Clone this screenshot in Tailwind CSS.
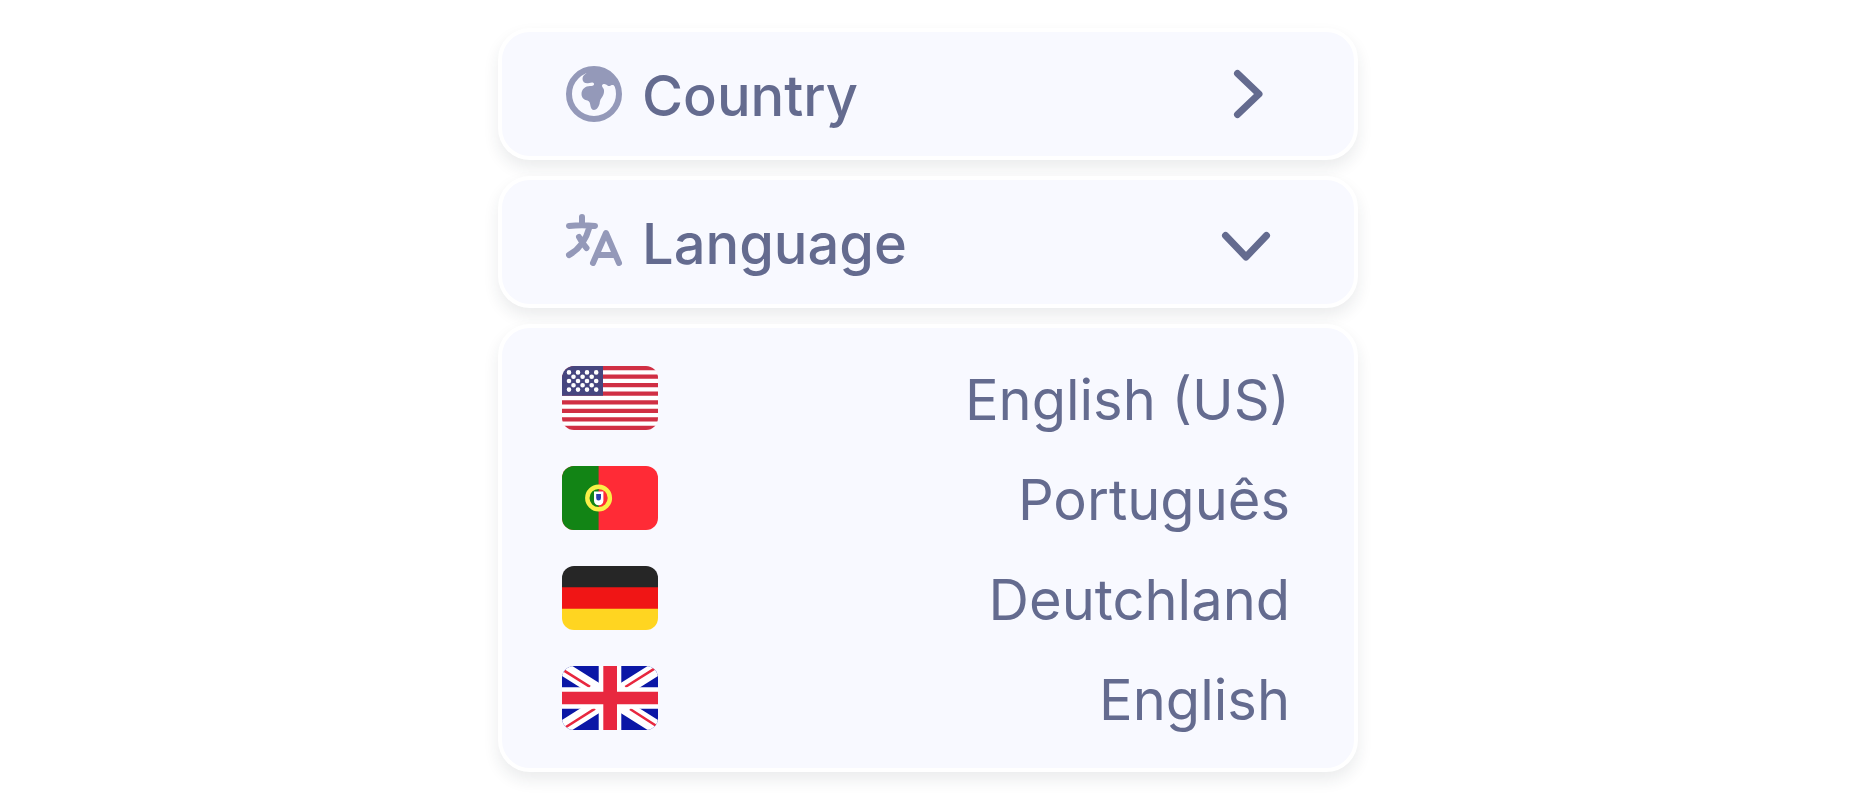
<!DOCTYPE html>
<html lang="en">

<head>
    <meta charset="UTF-8">
    <meta name="viewport" content="width=device-width, initial-scale=1.0">
    <script src="https://cdn.jsdelivr.net/npm/@tailwindcss/browser@4"></script>
    <title>Country and language</title>
</head>

<body class="bg-white font-['Inter',sans-serif] text-[56px] leading-[60px] text-[#646b8f]">
    <main class="mx-auto flex max-w-[860px] flex-col gap-4 py-7">
        <button type="button" aria-expanded="false"
            class="flex items-center gap-4 rounded-[32px] border-4 border-white bg-[#f8f9ff] py-[30px] pr-19 pl-15 text-left font-medium shadow-[0_8px_16px_rgba(30,40,60,0.09)]">
            <svg class="size-16 shrink-0 text-[#9499b9]" viewBox="0 0 64 64" fill="none" aria-hidden="true">
                <circle cx="32" cy="32" r="25" stroke="currentColor" stroke-width="6" />
                <path fill="currentColor"
                    d="M24 11.500C21.500 13 20.500 15 20.500 17C20.500 20 23 21.500 26 21.200L30 20.500C31.500 20.300 32.300 21.500 32 22.500C31.700 24 30 24 28 24C23.500 24 19.500 27 19.500 32C19.500 36.500 23 38 25.500 38.500C27.500 39 28 41 28.300 43C28.700 46 30 48 32 48C34.500 48 36.500 45 37.500 42C38 39 38 38 39.500 36C41.500 33.500 42.300 30.500 42 28C41.700 26 40 25.500 40 23.800C40 22 42.500 21.500 44 22.500C45.500 23.500 46 24.300 47.500 24C49.500 23.500 50 22.500 52 23.500L55 27C54 15 44 7 32 7C29 7 26.500 8 24 11.500Z" />
            </svg>
            <span class="grow pt-1">Country</span>
            <svg class="size-16 shrink-0" viewBox="0 0 64 64" fill="none" stroke="currentColor" stroke-width="7"
                stroke-linecap="round" stroke-linejoin="round" aria-hidden="true">
                <path d="M23.500 11.500L45 32L23.500 52.500" />
            </svg>
        </button>

        <button type="button" aria-expanded="true" aria-controls="languages"
            class="flex items-center gap-4 rounded-[32px] border-4 border-white bg-[#f8f9ff] py-[30px] pr-19 pl-15 text-left font-medium shadow-[0_8px_16px_rgba(30,40,60,0.09)]">
            <svg class="size-16 shrink-0 text-[#9499b9]" viewBox="0 0 64 64" fill="none" stroke="currentColor"
                stroke-width="6" stroke-linecap="round" stroke-linejoin="round" aria-hidden="true">
                <path d="M20 7V15M7 16Q20 14.500 33 16M27.500 17C24 30 18 39 7 45M17 27Q20 33 24.500 38" />
                <path d="M31 53L44 23L57 53M35.500 45H52.500" />
            </svg>
            <span class="grow pt-1">Language</span>
            <svg class="size-16 shrink-0" viewBox="0 0 64 64" fill="none" stroke="currentColor" stroke-width="7"
                stroke-linecap="round" stroke-linejoin="round" aria-hidden="true">
                <path d="M11.500 25.500L32 47L52.500 25.500" />
            </svg>
        </button>

        <ul id="languages"
            class="rounded-[32px] border-4 border-white bg-[#f8f9ff] py-5 pr-16 pl-15 shadow-[0_8px_16px_rgba(30,40,60,0.09)]">
            <li>
                <button type="button" class="flex w-full items-center justify-between py-[18px]">
                    <svg class="h-16 w-24 rounded-xl" viewBox="0 0 96 64" aria-hidden="true">
                        <path fill="#fff" d="M0 0H96V64H0z" />
                        <path stroke="#d02f44" stroke-width="4.270"
                            d="M0 2.130H96M0 10.670H96M0 19.200H96M0 27.730H96M0 36.270H96M0 44.800H96M0 53.330H96M0 61.870H96" />
                        <path fill="#46467f" d="M0 0H41V29.870H0z" />
                        <path stroke="#fff" stroke-width="4.600" stroke-linecap="round"
                            d="M7 6.400h0M16 6.400h0M25 6.400h0M34.200 6.400h0M11.500 10.700h0M20.600 10.700h0M29.700 10.700h0M7 15h0M16 15h0M25 15h0M34.200 15h0M11.500 19.300h0M20.600 19.300h0M29.700 19.300h0M7 23.600h0M16 23.600h0M25 23.600h0M34.200 23.600h0" />
                    </svg>
                    <span class="pt-1">English (US)</span>
                </button>
            </li>
            <li>
                <button type="button" class="flex w-full items-center justify-between py-[18px]">
                    <svg class="h-16 w-24 rounded-xl" viewBox="0 0 96 64" aria-hidden="true">
                        <path fill="#ff2b36" d="M0 0H96V64H0z" />
                        <path fill="#128415" d="M0 0H36.600V64H0z" />
                        <circle cx="36.600" cy="32" r="11.300" fill="none" stroke="#f9f048" stroke-width="4.400" />
                        <path fill="#fff"
                            d="M32 25.500H41.400V34.500C41.400 37.500 39.500 39.300 36.700 39.300C33.900 39.300 32 37.500 32 34.500z" />
                        <path fill="#2c3fae" d="M34.200 28H39V32Q39 34.500 36.600 34.500Q34.200 34.500 34.200 32z" />
                    </svg>
                    <span class="pt-1">Português</span>
                </button>
            </li>
            <li>
                <button type="button" class="flex w-full items-center justify-between py-[18px]">
                    <svg class="h-16 w-24 rounded-xl" viewBox="0 0 96 64" aria-hidden="true">
                        <path fill="#262626" d="M0 0H96V22H0z" />
                        <path fill="#f01515" d="M0 21.300H96V43H0z" />
                        <path fill="#ffd521" d="M0 42.700H96V64H0z" />
                    </svg>
                    <span class="pt-1">Deutchland</span>
                </button>
            </li>
            <li>
                <button type="button" class="flex w-full items-center justify-between py-[18px]">
                    <svg class="h-16 w-24 rounded-xl" viewBox="0 0 96 64" aria-hidden="true">
                        <path fill="#0b17a6" d="M0 0H96V64H0z" />
                        <path stroke="#fff" stroke-width="14" d="M-6 -2L102 66M-6 66L102 -2" />
                        <path stroke="#e8283f" stroke-width="2.600"
                            d="M2.500 4.800L28 20.800M92.500 2.700L63.300 21M4 61L33 42.700M68 43L93.700 59.500" />
                        <path fill="#fff" d="M36.700 0H59.300V64H36.700zM0 21.300H96V42.700H0z" />
                        <path fill="#e8283f" d="M41.300 0H55V64H41.300zM0 25.800H96V38.300H0z" />
                    </svg>
                    <span class="pt-1">English</span>
                </button>
            </li>
        </ul>
    </main>
</body>

</html>
